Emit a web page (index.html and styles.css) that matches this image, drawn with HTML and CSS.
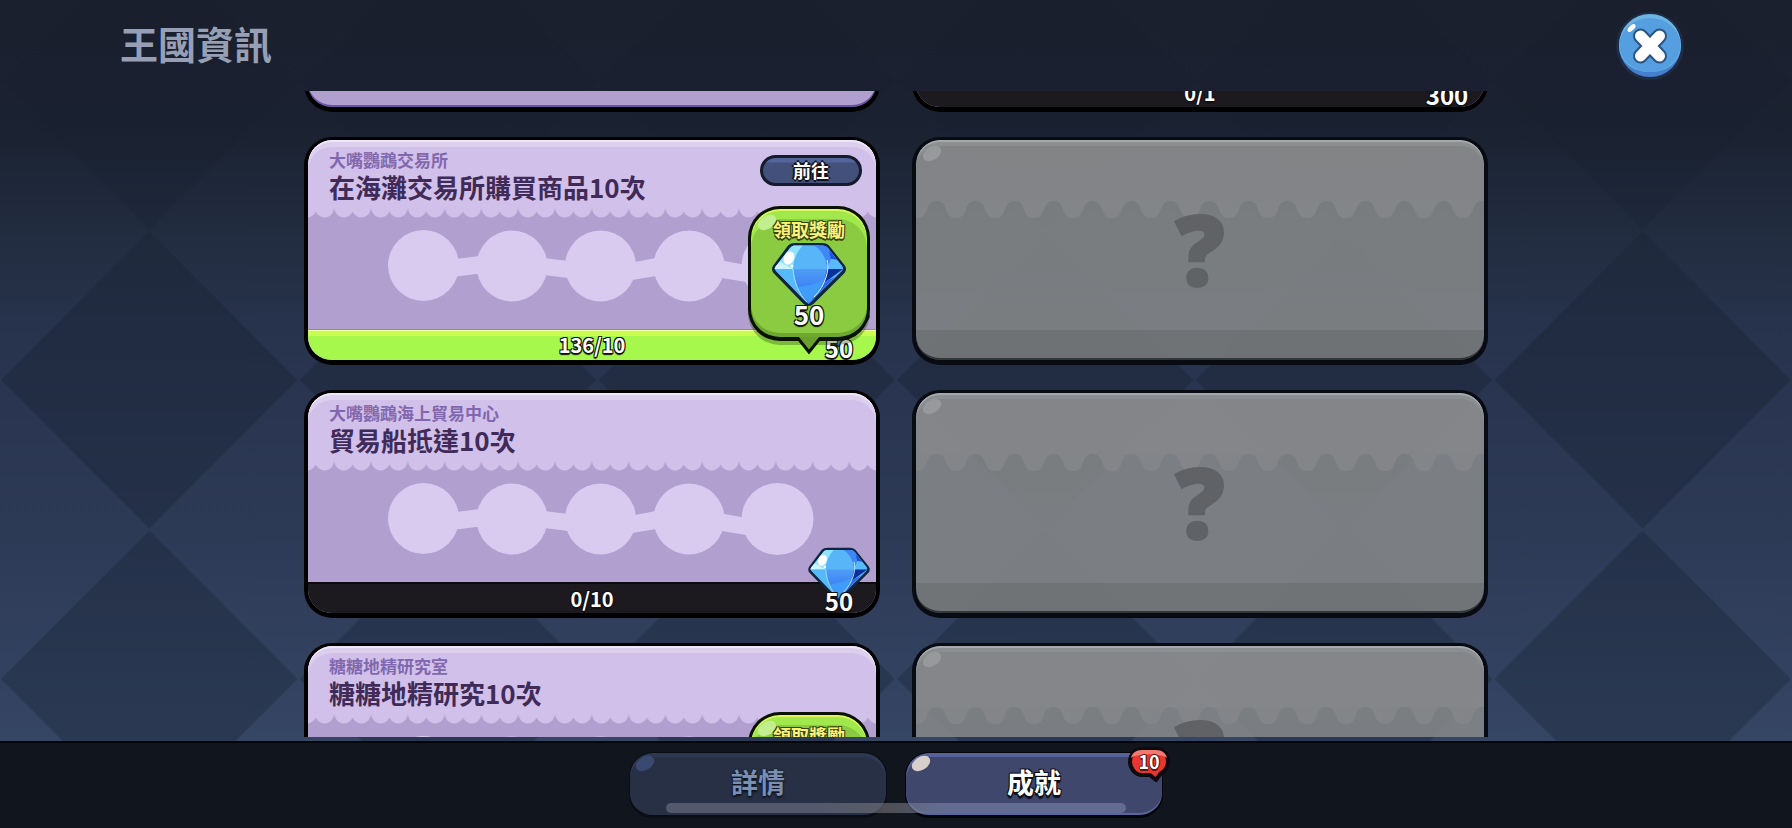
FILE: index.html
```html
<!DOCTYPE html>
<html lang="zh-Hant">
<head>
<meta charset="utf-8">
<title>王國資訊</title>
<link rel="stylesheet" href="styles.css">
</head>
<body>

<svg class="defs" aria-hidden="true">
  <defs>
    <pattern id="diamonds" width="298.67" height="299" y="230.5" patternUnits="userSpaceOnUse">
      <path class="diamond" d="M149.33 1L297.5 149.5L149.33 298L1 149.5Z"/>
    </pattern>
    <pattern id="scallops" width="36.8" height="12" x="-10.6" patternUnits="userSpaceOnUse">
      <path class="scallop" d="M0 -2V0C1 6 5 9.500 9.200 9.500C13 9.500 16.500 7.500 18.400 3.500C20.300 7.500 24 9.500 27.600 9.500C32 9.500 35.800 6 36.800 0V-2Z"/>
    </pattern>
    <pattern id="waves" width="39" height="18" x="1" patternUnits="userSpaceOnUse">
      <path class="wave" d="M0 -1V17C6 17 8 14 10 8C12 2 15 0 19.500 0C24 0 27 2 29 8C31 14 33 17 39 17V-1Z"/>
    </pattern>
    <linearGradient id="gem-low" x1="0" y1="0" x2="0" y2="1">
      <stop offset="0" stop-color="#4f9df6"/><stop offset="1" stop-color="#2c6cf0"/>
    </linearGradient>
    <symbol id="gem" viewBox="0 0 76 65">
      <path d="M24 2H51Q55 2 57 4L73 24Q75 27 73 30L42 61Q37.500 65 33 61L3 30Q1 27 3 24L18 4Q20 2 24 2Z" fill="#10253f" stroke="#10253f" stroke-width="2"/>
      <path d="M23 3.500H52Q55 3.500 57 6L71 24Q73 27 71 29L37.500 62L5 29Q3 27 5 24L19 6Q21 3.500 23 3.500Z" fill="#52b4fa"/>
      <path d="M23 3.500H32C26 10 22.500 18 22 27H3.500Q4 25 5 24L19 6Q21 3.500 23 3.500Z" fill="#8fe3fc"/>
      <path d="M3.500 27H22L9 20L5 24Z" fill="#cdf5ff"/>
      <path d="M32 3.500H47C53 10 56 18 56 27H22C22.500 18 26 10 32 3.500Z" fill="#58b6f8"/>
      <path d="M43 3.500H52Q55 3.500 57 6L62 13L60 22L56 27C56 18 51 8 43 3.500Z" fill="#3f86f7"/>
      <path d="M58 8L66 18L60 17Z" fill="#1d50e0"/>
      <path d="M60 17L66 18L71 24Q73 27 71 27H56Z" fill="#58b9fb"/>
      <path d="M4 27H22C23 40 29 53 37 62L5 29Z" fill="#56b9fa"/>
      <path d="M22 27H56C54 41 48 53 38 62C28 53 23 40 22 27Z" fill="url(#gem-low)"/>
      <path d="M56 27H72L53 41Z" fill="#0c2f9e"/>
      <path d="M53 40L64 35L37.500 62C47 53 51 46 53 40Z" fill="#2a6bef"/>
      <path d="M27 45C36 44 45 42 52 38C49 48 44 55 38 61C33 56 29 50 27 45Z" fill="#3f9cf8"/>
      <path d="M22 27C23 40 28 52 36 60" fill="none" stroke="#a9e6ff" stroke-width="1"/>
      <path d="M56 18C59 26 55 43 43 55" fill="none" stroke="#d8f4ff" stroke-width="1"/>
      <ellipse cx="18" cy="16" rx="5" ry="7" transform="rotate(25 18 16)" fill="#fff"/>
      <circle cx="21" cy="24" r="1.500" fill="#fff"/>
    </symbol>
    <symbol id="chain" viewBox="0 0 426 72">
      <circle cx="35.500" cy="35.500" r="35.500"/><circle cx="124" cy="36" r="35.500"/>
      <circle cx="212.500" cy="36" r="35.500"/><circle cx="301" cy="36" r="35.500"/><circle cx="389.500" cy="36" r="36"/>
      <path d="M68 29L92 26V43.500L68 46.500ZM156 28L180 31V48L156 45ZM244 32.500L268 28V46L244 50ZM334 30.500L358 35V52L334 48Z"/>
    </symbol>
  </defs>
</svg>

<svg class="backdrop" aria-hidden="true"><rect width="100%" height="100%" fill="url(#diamonds)"/></svg>

<header class="topbar">
  <h1 class="topbar-title">王國資訊</h1>
  <button class="close" aria-label="關閉">
    <svg viewBox="0 0 68 68" aria-hidden="true">
      <circle cx="34" cy="34" r="34" fill="#1f2c45"/>
      <circle cx="34" cy="34" r="31" fill="#477fd0"/>
      <path d="M3 33A31 31 0 0 1 65 33C65 49 52 60 34 60S3 49 3 33Z" fill="#6cb5e3"/>
      <ellipse cx="34" cy="33" rx="30.500" ry="27" fill="#559fe0"/>
      <path d="M24.500 24L43.500 44M43.500 24L24.500 44" stroke="#2b5480" stroke-width="15" stroke-linecap="round"/>
      <path d="M24.500 24L43.500 44M43.500 24L24.500 44" stroke="#fff" stroke-width="11" stroke-linecap="round"/>
      <ellipse cx="15.500" cy="16" rx="5" ry="2.500" transform="rotate(-45 15.500 16)" fill="#fff"/>
    </svg>
  </button>
</header>

<main class="list">
  <div class="grid">
    <article class="card card-done"></article>
    <article class="card">
      <div class="card-body"></div>
      <div class="bar">0/1</div>
      <div class="prize"><span class="amount">300</span></div>
    </article>

    <article class="card">
      <div class="card-head">
        <div class="card-text">
          <p class="place">大嘴鸚鵡交易所</p>
          <h2 class="goal">在海灘交易所購買商品10次</h2>
        </div>
        <button class="go">前往</button>
      </div>
      <svg class="edge" aria-hidden="true"><rect width="100%" height="12" fill="url(#scallops)"/></svg>
      <div class="card-body"><svg class="chain" aria-hidden="true"><use href="#chain"/></svg></div>
      <div class="bar bar-full">136/10</div>
      <div class="prize"><svg class="gem" aria-hidden="true"><use href="#gem"/></svg><span class="amount">50</span></div>
      <button class="claim">
        <span class="claim-label">領取獎勵</span>
        <svg class="claim-gem" aria-hidden="true"><use href="#gem"/></svg>
        <span class="claim-amount">50</span>
        <svg class="claim-tail" viewBox="0 0 28 19" aria-hidden="true"><path d="M2 0L14 15L26 0" fill="#69a02c" stroke="#0a1204" stroke-width="3"/></svg>
      </button>
    </article>
    <article class="card card-locked">
      <div class="locked-head"></div>
      <svg class="edge edge-wave" aria-hidden="true"><rect width="100%" height="18" fill="url(#waves)"/></svg>
      <div class="locked-body"></div>
      <div class="locked-foot"></div>
      <span class="question">?</span>
    </article>

    <article class="card">
      <div class="card-head">
        <div class="card-text">
          <p class="place">大嘴鸚鵡海上貿易中心</p>
          <h2 class="goal">貿易船抵達10次</h2>
        </div>
      </div>
      <svg class="edge" aria-hidden="true"><rect width="100%" height="12" fill="url(#scallops)"/></svg>
      <div class="card-body"><svg class="chain" aria-hidden="true"><use href="#chain"/></svg></div>
      <div class="bar">0/10</div>
      <div class="prize"><svg class="gem" aria-hidden="true"><use href="#gem"/></svg><span class="amount">50</span></div>
    </article>
    <article class="card card-locked">
      <div class="locked-head"></div>
      <svg class="edge edge-wave" aria-hidden="true"><rect width="100%" height="18" fill="url(#waves)"/></svg>
      <div class="locked-body"></div>
      <div class="locked-foot"></div>
      <span class="question">?</span>
    </article>

    <article class="card">
      <div class="card-head">
        <div class="card-text">
          <p class="place">糖糖地精研究室</p>
          <h2 class="goal">糖糖地精研究10次</h2>
        </div>
      </div>
      <svg class="edge" aria-hidden="true"><rect width="100%" height="12" fill="url(#scallops)"/></svg>
      <div class="card-body"><svg class="chain" aria-hidden="true"><use href="#chain"/></svg></div>
      <button class="claim">
        <span class="claim-label">領取獎勵</span>
      </button>
    </article>
    <article class="card card-locked">
      <div class="locked-head"></div>
      <svg class="edge edge-wave" aria-hidden="true"><rect width="100%" height="18" fill="url(#waves)"/></svg>
      <div class="locked-body"></div>
      <div class="locked-foot"></div>
      <span class="question">?</span>
    </article>
  </div>
</main>

<footer class="tabs">
  <button class="tab">詳情</button>
  <button class="tab tab-active">成就
    <span class="badge">
      <svg class="badge-shape" viewBox="0 0 42 37" aria-hidden="true">
        <path d="M14 2H28C35 2 40 7 40 14C40 20 37 24 33 26L28 33L22 28H14C7 28 2 21 2 14.500S7 2 14 2Z" fill="#e8352d" stroke="#0d0a10" stroke-width="4" stroke-linejoin="round"/>
        <path d="M14 3H28C34 3 38 6 39 11C32 6 10 6 3 11C4 6 8 3 14 3Z" fill="#ef7a72"/>
      </svg>
      <span class="badge-count">10</span>
    </span>
  </button>
  <div class="home-indicator"></div>
</footer>

</body>
</html>
```
FILE: styles.css
```css
* { box-sizing: border-box; }

body {
  margin: 0;
  height: 100vh;
  display: flex;
  flex-direction: column;
  overflow: hidden;
  font-family: "Noto Sans CJK TC", "Noto Sans", sans-serif;
  background: linear-gradient(#1a202e 0, #1a2130 120px, #222d41 240px, #28334e 340px, #2d3a56 530px, #354564 740px);
}

button { font: inherit; padding: 0; cursor: pointer; }
h1, h2, p { margin: 0; }

.defs { position: absolute; width: 0; height: 0; }
.diamond { fill: #101a26; }
.scallop { fill: #d1c0e9; }
.wave { fill: #848588; }

.backdrop {
  position: absolute;
  inset: 0;
  width: 100%;
  height: 100%;
  z-index: -1;
  opacity: 0.27;
  -webkit-mask-image: linear-gradient(rgba(0, 0, 0, 0.15) 100px, #000 340px);
  mask-image: linear-gradient(rgba(0, 0, 0, 0.15) 100px, #000 340px);
}

/* Top bar */
.topbar {
  flex: none;
  height: 91px;
  padding: 0 108px 0 120px;
  display: flex;
  align-items: center;
  justify-content: space-between;
}
.topbar-title { padding-bottom: 6px; font-size: 38px; line-height: 56px; font-weight: 700; color: #969fb3; }
.close { width: 68px; height: 68px; border: 0; border-radius: 50%; background: none; }
.close svg { display: block; width: 100%; height: 100%; }

/* Achievement list */
.list { flex: 1; min-height: 0; overflow: hidden; margin-bottom: 4px; }
.grid {
  width: 1184px;
  max-width: 94%;
  margin: -207px auto 0;
  display: grid;
  grid-template-columns: 1fr 1fr;
  gap: 25px 32px;
}

.card {
  position: relative;
  height: 228px;
  display: flex;
  flex-direction: column;
  overflow: hidden;
  border: solid #000;
  border-width: 3px 4px 5px;
  border-radius: 28px;
  background: #b19fd0;
}
.card-done { box-shadow: inset 0 -2px #6d51a5; }

.card-head {
  flex: none;
  height: 68px;
  padding: 9px 14px 0 21px;
  display: flex;
  justify-content: space-between;
  align-items: flex-start;
  background: #d1c0e9;
  border-radius: 24px 24px 0 0;
  box-shadow: inset 0 2px #eee6f8, inset 0 7px #dccfee;
}
.place { font-size: 17px; line-height: 21px; font-weight: 700; color: #8168ae; }
.goal { font-size: 26px; line-height: 34px; font-weight: 700; color: #402b58; }

.edge { flex: none; display: block; width: 100%; height: 12px; }
.card-body { flex: 1; padding: 10px 0 0 80px; }
.chain { display: block; width: 426px; height: 72px; fill: #d9cbf0; }

.go {
  width: 102px;
  height: 31px;
  margin-top: 6px;
  border: 3px solid #151a2c;
  border-radius: 16px;
  background: linear-gradient(#54659c 4px, #435079 5px);
  color: #fff;
  font-size: 18px;
  line-height: 22px;
  padding-bottom: 2px;
  font-weight: 700;
  text-shadow: -2px 0 #12151f, 2px 0 #12151f, 0 -2px #12151f, 0 2px #12151f;
}

.bar {
  flex: none;
  height: 31px;
  border-top: 2px solid #0d0b10;
  background: #1c191f;
  color: #fff;
  font-size: 20px;
  line-height: 29px;
  font-weight: 700;
  text-align: center;
  text-shadow: -1px -1px #111, 1px -1px #111, -1px 1px #111, 1px 1px #111, 0 2px 1px #111;
}
.bar-full {
  border-top: 1px solid #a08a72;
  background: linear-gradient(#f0ffa0 1px, #c8fc50 1px, #c8fc50 6px, #a6f94c 6px);
  line-height: 30px;
}

.prize {
  position: absolute;
  right: 5px;
  bottom: -3px;
  width: 64px;
  display: flex;
  flex-direction: column;
  align-items: center;
}
.gem { width: 64px; height: 54px; margin-bottom: -15px; }
.amount, .claim-amount {
  position: relative;
  color: #fff;
  font-size: 24px;
  line-height: 30px;
  font-weight: 700;
  text-shadow: -1px -1px #111, 1px -1px #111, -1px 1px #111, 1px 1px #111, 0 2px 1px #111;
}
.claim-amount { font-size: 26px; }

.claim {
  position: absolute;
  top: 66px;
  right: 6px;
  width: 122px;
  height: 135px;
  padding-top: 8px;
  display: flex;
  flex-direction: column;
  align-items: center;
  border: solid #0a1204;
  border-width: 3px 3px 4px;
  border-radius: 32px;
  background: #8bcb41;
  box-shadow: inset 0 2px #dcf65e, inset 0 10px #a0e84c, inset 0 -4px #6fa82f, 0 4px rgba(40, 70, 20, 0.35);
}
.claim::before, .card-locked::before, .tab::before {
  content: "";
  position: absolute;
  left: 6px;
  top: 7px;
  width: 20px;
  height: 13px;
  border-radius: 50%;
  transform: rotate(-32deg);
  background: #c2ee90;
}
.claim-label {
  position: relative;
  color: #fbf27a;
  font-size: 18px;
  line-height: 24px;
  font-weight: 700;
  text-shadow: -1px -1px #36440e, 1px -1px #36440e, -1px 1px #36440e, 1px 1px #36440e, 0 2px #36440e;
}
.claim-gem { width: 76px; height: 65px; margin: 1px 0 -8px; flex: none; }
.claim-tail { position: absolute; left: 44px; bottom: -19px; width: 28px; height: 19px; }

/* Locked cards */
.card-locked {
  border-color: #080b12;
  background: rgba(132, 132, 130, 0.15);
  background-clip: padding-box;
}
.card-locked::before { background: #97999a; left: 6px; }
.locked-head {
  flex: none;
  height: 61px;
  background: rgba(144, 144, 145, 0.88);
  border-radius: 24px 24px 0 0;
  box-shadow: inset 0 2px #a5a9ac, inset 0 6px rgba(145, 150, 152, 0.6);
}
.edge-wave { height: 18px; background: rgba(132, 134, 135, 0.88); }
.locked-body { flex: 1; background: rgba(132, 134, 135, 0.88); }
.locked-foot {
  flex: none;
  height: 30px;
  background: rgba(118, 121, 121, 0.9);
  border-bottom: 2px solid #34373a;
  border-radius: 0 0 24px 24px;
}
.question {
  position: absolute;
  inset: 0;
  padding-bottom: 5px;
  display: flex;
  align-items: center;
  justify-content: center;
  color: #606266;
  font-family: "Noto Sans", sans-serif;
  font-size: 98px;
  line-height: 96px;
  font-weight: 900;
  -webkit-text-stroke: 2px #606266;
}

/* Bottom tabs */
.tabs {
  position: relative;
  flex: none;
  height: 87px;
  padding-top: 9px;
  display: flex;
  justify-content: center;
  gap: 18px;
  border-top: 2px solid #04060a;
  background: #11151d;
}
.tab {
  position: relative;
  width: 258px;
  height: 66px;
  border: solid #0a0d14;
  border-width: 1px 1px 3px;
  border-radius: 24px;
  padding-bottom: 4px;
  background: #273044;
  color: #7b8fb2;
  box-shadow: inset 0 4px #2d3852;
  font-size: 27px;
  line-height: 56px;
  font-weight: 700;
  text-shadow: 0 2px 2px #0d121d, 0 0 2px #0d121d;
}
.tab::before { left: 5px; top: 4px; background: #3b4870; }
.tab-active {
  border-color: #020307;
  background: #3f476d;
  color: #fff;
  box-shadow: inset 0 4px #56639a, inset 0 -2px #5867a0;
  text-shadow: -1px -1px #0d0f18, 1px -1px #0d0f18, -1px 1px #0d0f18, 1px 1px #0d0f18, 0 3px 1px #0d0f18;
}
.tab-active::before { background: #d8cfca; }

.badge { position: absolute; right: -8px; top: -6px; width: 42px; height: 37px; }
.badge-shape { position: absolute; inset: 0; width: 42px; height: 37px; }
.badge-count {
  position: relative;
  display: block;
  color: #fff;
  font-size: 18px;
  line-height: 29px;
  text-shadow: -1px 0 #5d1417, 1px 0 #5d1417, 0 -1px #5d1417, 0 2px #5d1417;
}

.home-indicator {
  position: absolute;
  left: 50%;
  bottom: 15px;
  width: 460px;
  height: 10px;
  margin-left: -230px;
  border-radius: 5px;
  background: linear-gradient(90deg, rgba(120, 124, 138, 0.55) 35%, rgba(130, 128, 132, 0.55) 48%, rgba(125, 138, 175, 0.55) 60%);
}
```
